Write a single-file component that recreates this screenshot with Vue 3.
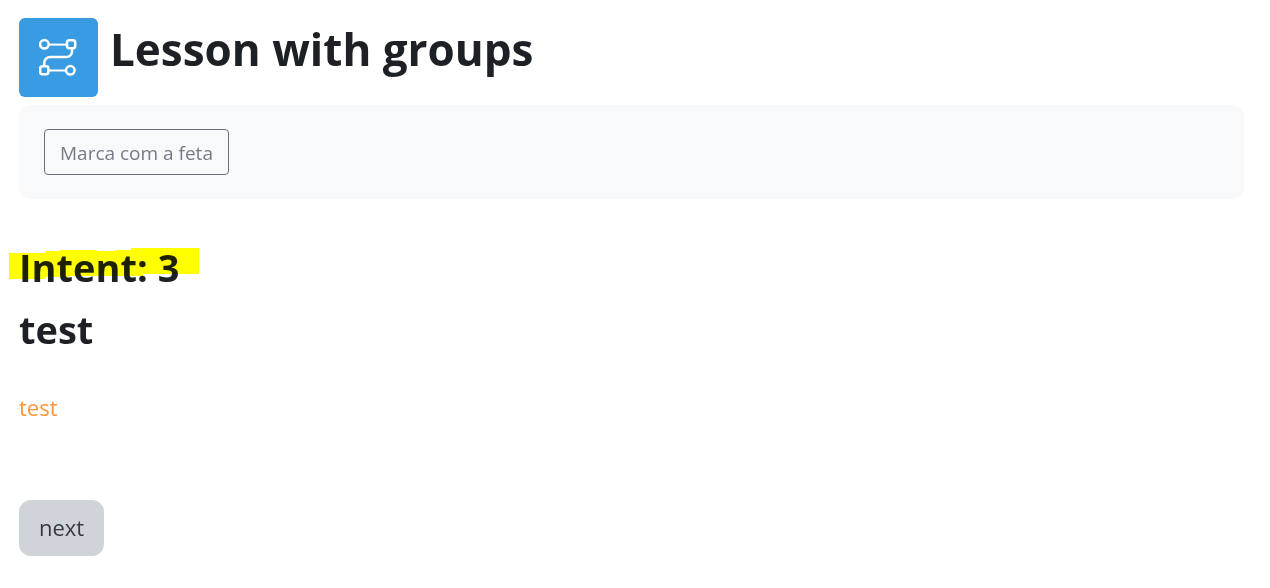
<script setup>
const activity = {
  name: 'Lesson with groups',
  attempt: 'Intent: 3',
  page: 'test',
  content: 'test'
}
</script>

<template>
  <main class="lesson">
    <header class="head">
      <div class="badge">
        <svg viewBox="0 0 40 40" fill="none" stroke="#fff" stroke-width="2.5" aria-hidden="true">
          <circle cx="5.4" cy="6.3" r="4.3" />
          <path stroke-width="2" d="M9.7 6.6H27.8" />
          <rect x="28" y="2.3" width="8.2" height="8" rx="2.2" />
          <path d="M33 10.3v3.2a5.500 5.500 0 0 1-5.500 5.500H11.200a6 6 0 0 0-6 6v3" />
          <rect x="1.2" y="28.2" width="8.2" height="8" rx="2.2" />
          <path stroke-width="2" d="M9.4 32.5H27" />
          <circle cx="31.3" cy="32.3" r="4.3" />
        </svg>
      </div>
      <h1>{{ activity.name }}</h1>
    </header>

    <section class="completion">
      <button type="button" class="mark">Marca com a feta</button>
    </section>

    <h2 class="attempt">
      {{ activity.attempt }}
      <svg class="marker" viewBox="0 0 190 31" preserveAspectRatio="none" aria-hidden="true">
        <path fill="#ff0" d="M0 5H36V3H51V2H88V3H106V2H122V0H190V26H134V28H60V29H36V31H0Z" />
      </svg>
    </h2>
    <h2>{{ activity.page }}</h2>
    <p>{{ activity.content }}</p>
    <button type="button" class="next">next</button>
  </main>
</template>

<style>
body {
  background: #fff;
}
</style>

<style scoped>
.lesson {
  padding: 18px 26px 32px 19px;
  color: #1d2125;
  font-family: "Segoe UI", "Open Sans", "Noto Sans", sans-serif;
}

.head {
  display: flex;
  gap: 12px;
}

.badge {
  display: flex;
  align-items: center;
  justify-content: center;
  width: 79px;
  height: 79px;
  border-radius: 6px;
  background: #399be2;
}

.badge svg {
  width: 40px;
  height: 40px;
}

h1,
h2,
p {
  margin: 0;
}

h1 {
  font-size: 44px;
  line-height: 62px;
  font-weight: 700;
}

h2 {
  font-size: 38px;
  line-height: 48px;
  font-weight: 700;
}

.completion {
  margin: 8px 0 44px;
  padding: 24px 25px;
  border-radius: 12px;
  background: #f8f9fb;
}

button {
  display: block;
  font-family: inherit;
  cursor: pointer;
}

.mark {
  padding: 8px 15px 6px;
  border: 1px solid #6a737b;
  border-radius: 4px;
  background: transparent;
  color: #747c84;
  font-size: 19px;
  line-height: 30px;
}

.attempt {
  position: relative;
  width: fit-content;
  margin-bottom: 14px;
}

.marker {
  position: absolute;
  top: 5px;
  left: -10px;
  width: 190px;
  height: 31px;
  mix-blend-mode: multiply;
  pointer-events: none;
}

p {
  margin: 36px 0 75px;
  color: #ff943b;
  font-size: 22px;
  line-height: 36px;
}

.next {
  padding: 9px 20px 11px;
  border: 0;
  border-radius: 12px;
  background: #ced4da;
  color: #343a40;
  font-size: 22px;
  line-height: 36px;
}
</style>
